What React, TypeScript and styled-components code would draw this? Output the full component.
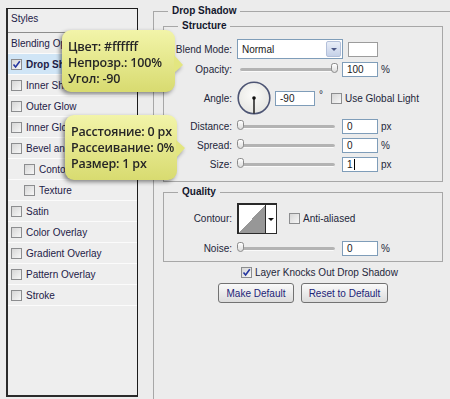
import styled, { createGlobalStyle } from "styled-components";

const GlobalStyle = createGlobalStyle`
  html, body {
    margin: 0;
    padding: 0;
  }
  body {
    width: 450px;
    height: 399px;
    overflow: hidden;
    background: #ececec;
    font-family: "Liberation Sans", Arial, sans-serif;
    font-size: 10px;
    color: #23263a;
  }
`;

type StyleItem = {
  name: string;
  checked?: boolean;
  active?: boolean;
  indent?: boolean;
};

const styleItems: StyleItem[] = [
  { name: "Drop Shadow", checked: true, active: true },
  { name: "Inner Shadow" },
  { name: "Outer Glow" },
  { name: "Inner Glow" },
  { name: "Bevel and Emboss" },
  { name: "Contour", indent: true },
  { name: "Texture", indent: true },
  { name: "Satin" },
  { name: "Color Overlay" },
  { name: "Gradient Overlay" },
  { name: "Pattern Overlay" },
  { name: "Stroke" },
];

const Page = styled.div`
  position: relative;
  display: flex;
  align-items: flex-start;
  gap: 15px;
  box-sizing: border-box;
  width: 450px;
  height: 399px;
  padding: 5px 0 0 6px;
  overflow: hidden;
`;

/* ---------- left styles list ---------- */

const StylesPanel = styled.div`
  flex: none;
  box-sizing: border-box;
  width: 132px;
  height: 389px;
  margin-top: 3px;
  border: 1px solid #1c1c1c;
  border-left: 2px solid #2b2b2b;
  border-bottom: 2px solid #2b2b2b;
  background: #eeeeee;
  overflow: hidden;
`;

const PanelHeader = styled.div`
  height: 24px;
  padding: 4px 0 0 3px;
  box-sizing: border-box;
  border-bottom: 1px solid #8d8d8d;
  color: #1d2147;
`;

const StyleRow = styled.div<{ $active?: boolean; $indent?: boolean }>`
  display: flex;
  align-items: center;
  gap: 4px;
  height: 20px;
  padding-left: ${(p) => (p.$indent ? 16 : 3)}px;
  border-bottom: 1px solid #fbfbfb;
  background: ${(p) => (p.$active ? "#d0e5f6" : "transparent")};
  font-weight: ${(p) => (p.$active ? "bold" : "normal")};
  color: #1d2147;
  white-space: nowrap;
`;

/* ---------- shared controls ---------- */

const Box = styled.span`
  flex: none;
  position: relative;
  display: inline-flex;
  align-items: center;
  justify-content: center;
  box-sizing: border-box;
  width: 11px;
  height: 11px;
  border: 1px solid #8c8d8f;
  background: linear-gradient(135deg, #d6d6d6, #f7f7f7);
`;

function CheckBox({ checked }: { checked?: boolean }) {
  return (
    <Box>
      {checked && (
        <svg width="9" height="9" viewBox="0 0 9 9">
          <path
            d="M1.5 4.5 L3.6 7 L7.8 1.2"
            fill="none"
            stroke="#2536a0"
            strokeWidth="1.6"
          />
        </svg>
      )}
    </Box>
  );
}

const Group = styled.fieldset<{ $pad: string; $mt: number }>`
  box-sizing: border-box;
  width: 280px;
  min-width: 0;
  margin: ${(p) => p.$mt}px 0 0;
  padding: ${(p) => p.$pad};
  border: 1px solid #a7a7a7;
`;

const OuterGroup = styled.fieldset`
  flex: none;
  box-sizing: border-box;
  width: 320px;
  height: 420px;
  min-width: 0;
  margin: 0;
  padding: 0 0 0 9px;
  border: 1px solid #a7a7a7;
`;

const Legend = styled.legend<{ $inset: number }>`
  margin-left: ${(p) => p.$inset}px;
  padding: 0 4px;
  font-weight: bold;
  line-height: 12px;
  color: #14172c;
`;

const Row = styled.div<{ $h: number; $mt?: number }>`
  display: flex;
  align-items: center;
  height: ${(p) => p.$h}px;
  margin-top: ${(p) => p.$mt ?? 0}px;
`;

const Label = styled.span`
  flex: none;
  width: 68px;
  margin-right: 5px;
  text-align: right;
  white-space: nowrap;
`;

const Field = styled.div<{ $w?: number }>`
  flex: none;
  box-sizing: border-box;
  width: ${(p) => p.$w ?? 36}px;
  height: 15px;
  padding-left: 4px;
  border: 1px solid #7f9db9;
  background: #fff;
  line-height: 13px;
  color: #1a1a1a;
  display: flex;
  align-items: center;
`;

const Caret = styled.span`
  display: inline-block;
  width: 1px;
  height: 11px;
  margin-left: 1px;
  background: #000;
`;

const Unit = styled.span`
  margin-left: 3px;
`;

const SliderBox = styled.div`
  position: relative;
  flex: none;
  width: 101px;
  height: 14px;
  margin-right: 4px;
  display: flex;
  align-items: center;
`;

const Track = styled.div`
  flex: 1;
  margin: 1px 3px 0;
  height: 3px;
  border-radius: 2px;
  background: #b3b3b3;
  border-bottom: 1px solid #fafafa;
`;

const Thumb = styled.div`
  position: absolute;
  top: 1px;
  width: 7px;
  height: 10px;
  box-sizing: border-box;
  border: 1px solid #8b8b8b;
  border-radius: 3px 3px 4px 4px;
  background: linear-gradient(#ffffff, #dcdcdc);
`;

function Slider({ value }: { value: number }) {
  return (
    <SliderBox>
      <Track />
      <Thumb style={{ left: `${(value / 100) * 94}px` }} />
    </SliderBox>
  );
}

function SliderRow({
  label,
  value,
  text,
  unit,
  mt,
  caret,
}: {
  label: string;
  value: number;
  text: string;
  unit: string;
  mt?: number;
  caret?: boolean;
}) {
  return (
    <Row $h={16} $mt={mt}>
      <Label>{label}</Label>
      <Slider value={value} />
      <Field>
        {text}
        {caret && <Caret />}
      </Field>
      <Unit>{unit}</Unit>
    </Row>
  );
}

const Select = styled.div`
  flex: none;
  box-sizing: border-box;
  width: 106px;
  height: 20px;
  border: 1px solid #7f9db9;
  background: #fff;
  display: flex;
  align-items: center;
  justify-content: space-between;
  padding: 1px 1px 1px 4px;
  color: #1a1a1a;
`;

const DropButton = styled.span`
  box-sizing: border-box;
  width: 15px;
  height: 16px;
  border: 1px solid #b3c0da;
  border-radius: 2px;
  background: linear-gradient(#e9eef8, #c5d1e8);
  display: flex;
  align-items: center;
  justify-content: center;
  &::after {
    content: "";
    border-left: 3px solid transparent;
    border-right: 3px solid transparent;
    border-top: 3px solid #4b5786;
  }
`;

const Swatch = styled.span`
  flex: none;
  box-sizing: border-box;
  width: 30px;
  height: 15px;
  margin-left: 5px;
  border: 1px solid #9c9c9c;
  background: #fff;
`;

const Degree = styled.span`
  align-self: flex-start;
  margin: 8px 8px 0 4px;
`;

const CheckLabel = styled.label`
  display: flex;
  align-items: center;
  gap: 3px;
  white-space: nowrap;
`;

const ContourPicker = styled.div`
  flex: none;
  box-sizing: border-box;
  width: 40px;
  height: 31px;
  margin-right: 12px;
  display: flex;
  border: 1px solid #2a2a2a;
  border-top-width: 2px;
  border-left-width: 2px;
  background: #fff;
`;

const ContourPreview = styled.span`
  flex: 1;
  background: linear-gradient(to top left, #979797 50%, #ffffff 50%);
`;

const ContourDrop = styled.span`
  width: 10px;
  border-left: 1px solid #2a2a2a;
  display: flex;
  align-items: center;
  justify-content: center;
  &::after {
    content: "";
    border-left: 3px solid transparent;
    border-right: 3px solid transparent;
    border-top: 3px solid #111;
  }
`;

const KnockRow = styled.div`
  margin: 4px 0 0 78px;
  height: 12px;
  display: flex;
  align-items: center;
`;

const ButtonRow = styled.div`
  width: 280px;
  margin-top: 5px;
  display: flex;
  justify-content: center;
  gap: 7px;
`;

const Button = styled.button<{ $w: number }>`
  box-sizing: border-box;
  width: ${(p) => p.$w}px;
  height: 20px;
  padding: 0;
  border: 1px solid #727272;
  border-radius: 3px;
  background: linear-gradient(#fafafa, #dcdcdc);
  font-family: "Liberation Sans", Arial, sans-serif;
  font-size: 10px;
  color: #1c2478;
`;

/* ---------- yellow hint balloons ---------- */

const Balloon = styled.div<{ $x: number; $y: number; $w: number; $h: number; $tip: number }>`
  position: absolute;
  left: ${(p) => p.$x}px;
  top: ${(p) => p.$y}px;
  width: ${(p) => p.$w}px;
  height: ${(p) => p.$h}px;
  box-sizing: border-box;
  padding: 9px 0 0 6px;
  border-radius: 9px;
  background: linear-gradient(#f2f4a9, #d8db70);
  filter: drop-shadow(-2px 2px 2px rgba(0, 0, 0, 0.45));
  font-family: "Open Sans", "Noto Sans", sans-serif;
  font-weight: 600;
  font-size: 12.5px;
  letter-spacing: -0.2px;
  line-height: 16px;
  color: #262626;
  white-space: nowrap;
  &::after {
    content: "";
    position: absolute;
    right: -8px;
    top: 25px;
    width: 9px;
    height: 18px;
    background: #e3e680;
    clip-path: polygon(0 0, 100% ${(p) => p.$tip}%, 0 100%);
  }
`;

export default function App() {
  return (
    <>
      <GlobalStyle />
      <Page>
        <StylesPanel>
          <PanelHeader>Styles</PanelHeader>
          <StyleRow>Blending Options: Default</StyleRow>
          {styleItems.map((item) => (
            <StyleRow key={item.name} $active={item.active} $indent={item.indent}>
              <CheckBox checked={item.checked} />
              {item.name}
            </StyleRow>
          ))}
        </StylesPanel>

        <OuterGroup>
          <Legend $inset={5}>Drop Shadow</Legend>

          <Group $pad="7px 0 9px" $mt={3}>
            <Legend $inset={14}>Structure</Legend>
            <Row $h={20}>
              <Label>Blend Mode:</Label>
              <Select>
                Normal
                <DropButton />
              </Select>
              <Swatch />
            </Row>
            <SliderRow label="Opacity:" value={100} text="100" unit="%" mt={2} />
            <Row $h={34} $mt={4}>
              <Label>Angle:</Label>
              <svg width="34" height="34" viewBox="0 0 34 34" style={{ flex: "none", marginRight: 4 }}>
                <defs>
                  <radialGradient id="dialFill" cx="45%" cy="40%" r="60%">
                    <stop offset="0" stopColor="#fbfbf9" />
                    <stop offset="1" stopColor="#e6e6e2" />
                  </radialGradient>
                </defs>
                <circle cx="17" cy="17" r="15.8" fill="url(#dialFill)" stroke="#4d5574" strokeWidth="1.6" />
                <line x1="17" y1="17" x2="17" y2="32.5" stroke="#111" strokeWidth="1.4" />
                <circle cx="17" cy="17" r="1.8" fill="#111" />
              </svg>
              <Field $w={40}>-90</Field>
              <Degree>°</Degree>
              <CheckLabel>
                <CheckBox />
                Use Global Light
              </CheckLabel>
            </Row>
            <SliderRow label="Distance:" value={0} text="0" unit="px" mt={3} />
            <SliderRow label="Spread:" value={0} text="0" unit="%" mt={3} />
            <SliderRow label="Size:" value={0} text="1" unit="px" mt={3} caret />
          </Group>

          <Group $pad="5px 0 5px" $mt={4}>
            <Legend $inset={14}>Quality</Legend>
            <Row $h={31}>
              <Label>Contour:</Label>
              <ContourPicker>
                <ContourPreview />
                <ContourDrop />
              </ContourPicker>
              <CheckLabel>
                <CheckBox />
                Anti-aliased
              </CheckLabel>
            </Row>
            <SliderRow label="Noise:" value={0} text="0" unit="%" mt={6} />
          </Group>

          <KnockRow>
            <CheckLabel>
              <CheckBox checked />
              Layer Knocks Out Drop Shadow
            </CheckLabel>
          </KnockRow>

          <ButtonRow>
            <Button $w={76}>Make Default</Button>
            <Button $w={87}>Reset to Default</Button>
          </ButtonRow>
        </OuterGroup>

        <Balloon $x={62} $y={30} $w={113} $h={62} $tip={55}>
          Цвет: #ffffff
          <br />
          Непрозр.: 100%
          <br />
          Угол: -90
        </Balloon>
        <Balloon $x={65} $y={115} $w={112} $h={65} $tip={45}>
          Расстояние: 0 px
          <br />
          Рассеивание: 0%
          <br />
          Размер: 1 px
        </Balloon>
      </Page>
    </>
  );
}
